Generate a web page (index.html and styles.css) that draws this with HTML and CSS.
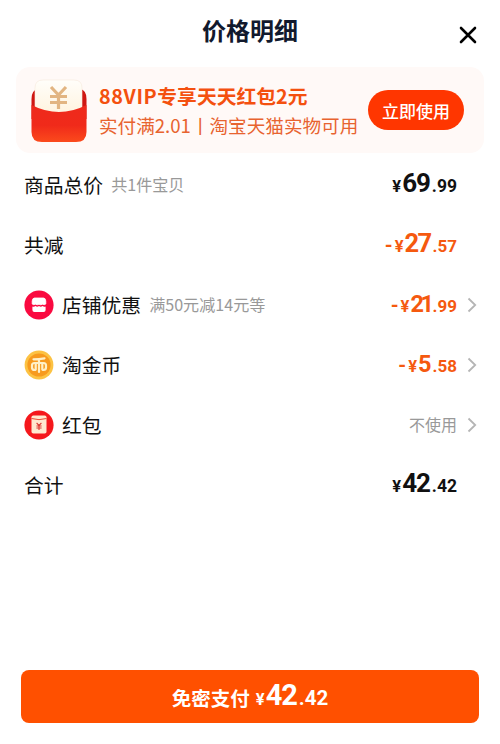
FILE: index.html
```html
<!DOCTYPE html>
<html lang="zh-CN">
<head>
    <meta charset="UTF-8">
    <meta name="viewport" content="width=device-width, initial-scale=1.0">
    <title>价格明细</title>
    <link rel="stylesheet" href="styles.css">
</head>
<body>
    <div class="sheet">
        <header class="header">
            <h1 class="title">价格明细</h1>
            <button class="close" aria-label="关闭">
                <svg width="18" height="18" viewBox="0 0 18 18"><path d="M2 2 L16 16 M16 2 L2 16" fill="none" stroke="#000" stroke-width="2.6" stroke-linecap="round"/></svg>
            </button>
        </header>

        <section class="banner">
            <svg class="banner-icon" width="56" height="64" viewBox="0 0 56 64">
                <defs>
                    <linearGradient id="packet" x1="0" y1="0" x2="0" y2="1">
                        <stop offset="0" stop-color="#ee2a1c"/>
                        <stop offset="0.55" stop-color="#f02a1a"/>
                        <stop offset="1" stop-color="#fb4a1c"/>
                    </linearGradient>
                    <linearGradient id="paper" x1="0" y1="0" x2="0" y2="1">
                        <stop offset="0" stop-color="#fffefa"/>
                        <stop offset="1" stop-color="#fff3de"/>
                    </linearGradient>
                </defs>
                <path d="M0.5 20 Q0.5 11 7 10 H49 Q55.5 11 55.5 20 V40 H0.5Z" fill="#cf1712"/>
                <path d="M4 9 Q4 1 12 1 H43 Q51 1 51 9 V36 H4Z" fill="url(#paper)" stroke="#f7e9dc" stroke-width="0.6"/>
                <g fill="none" stroke="#e2b582" stroke-width="3.2">
                    <path d="M20 8 L27.5 16 L35 8 M19 17.5 H36 M19 23.5 H36 M27.5 16 V30"/>
                </g>
                <path d="M0.5 26 Q28 40 55.5 26 V53 Q55.5 63 45 63 H11 Q0.5 63 0.5 53Z" fill="url(#packet)"/>
            </svg>
            <div class="banner-text">
                <div class="banner-title"><span class="vip">88VIP</span>专享天天红包2元</div>
                <div class="banner-desc">实付满2.01丨淘宝天猫实物可用</div>
            </div>
            <button class="use-button">立即使用</button>
        </section>

        <ul class="list">
            <li class="row">
                <span class="label">商品总价</span>
                <span class="note">共1件宝贝</span>
                <span class="price"><span class="yen">¥</span><span class="int">69</span><span class="dec">.99</span></span>
            </li>
            <li class="row">
                <span class="label">共减</span>
                <span class="price minus"><span class="sign">-</span><span class="yen">¥</span><span class="int">27</span><span class="dec">.57</span></span>
            </li>
            <li class="row link">
                <svg class="icon" width="30" height="30" viewBox="0 0 30 30">
                    <circle cx="15" cy="15" r="14.6" fill="#fa0a40"/>
                    <path d="M10.5 8 H19.5 Q21.5 8 21.8 11 V14 Q20.5 15.2 18.5 14.2 Q16.8 15.4 15 14.2 Q13.2 15.4 11.5 14.2 Q9.5 15.2 8.2 14 V11 Q8.5 8 10.5 8Z" fill="#fff" stroke="#fff" stroke-width="0.8" stroke-linejoin="round"/>
                    <path d="M8.4 16.4 Q10 17 11.5 16 Q13.2 17.4 15 16 Q16.8 17.4 18.5 16 Q20 17 21.6 16.4 V20 Q21.6 22 19.6 22 H10.4 Q8.4 22 8.4 20Z" fill="#fff"/>
                </svg>
                <span class="label">店铺优惠</span>
                <span class="note">满50元减14元等</span>
                <span class="price minus small"><span class="sign">-</span><span class="yen">¥</span><span class="int tight">21</span><span class="dec">.99</span></span>
                <svg class="arrow" width="10" height="16" viewBox="0 0 10 16"><path d="M1.5 1.5 L8.2 8 L1.5 14.5"/></svg>
            </li>
            <li class="row link">
                <svg class="icon" width="30" height="30" viewBox="0 0 30 30">
                    <circle cx="15" cy="15" r="14.4" fill="#fcc243"/>
                    <circle cx="15" cy="15" r="11.6" fill="#f79a1e"/>
                    <g fill="none" stroke="#fff0c8" stroke-width="2.2" stroke-linecap="round" stroke-linejoin="round">
                        <path d="M9.5 9.3 Q15 9.3 20.5 8.3 M15 9 V22 M11.5 20 H10.5 Q8 20 8 17.5 V15.5 Q8 13 10.5 13 H19.5 Q22 13 22 15.5 V17.5 Q22 20 19.5 20 H18.7 M11.7 13.5 V19.5 M18.3 13.5 V19.5"/>
                    </g>
                </svg>
                <span class="label">淘金币</span>
                <span class="price minus small"><span class="sign">-</span><span class="yen">¥</span><span class="int">5</span><span class="dec">.58</span></span>
                <svg class="arrow" width="10" height="16" viewBox="0 0 10 16"><path d="M1.5 1.5 L8.2 8 L1.5 14.5"/></svg>
            </li>
            <li class="row link">
                <svg class="icon" width="30" height="30" viewBox="0 0 30 30">
                    <circle cx="15" cy="15" r="14.6" fill="#f5181c"/>
                    <rect x="7.5" y="5.5" width="15" height="18" rx="1.8" fill="#ffe9d0"/>
                    <path d="M7.5 8.5 Q15 10.8 22.5 8.5" fill="none" stroke="#ee4a35" stroke-width="1"/>
                    <path d="M12.6 13 L15 15.5 L17.4 13 M12.4 16 H17.6 M12.4 18 H17.6 M15 15.5 V20" fill="none" stroke="#dc3b34" stroke-width="1.1"/>
                </svg>
                <span class="label">红包</span>
                <span class="value">不使用</span>
                <svg class="arrow" width="10" height="16" viewBox="0 0 10 16"><path d="M1.5 1.5 L8.2 8 L1.5 14.5"/></svg>
            </li>
            <li class="row">
                <span class="label">合计</span>
                <span class="price"><span class="yen">¥</span><span class="int">42</span><span class="dec">.42</span></span>
            </li>
        </ul>

        <button class="pay-button">
            <span class="pay-text">免密支付</span>
            <span class="price pay-price"><span class="yen">¥</span><span class="int">42</span><span class="dec">.42</span></span>
        </button>
    </div>
</body>
</html>
```

FILE: styles.css
```css
* {
    box-sizing: border-box;
}

body {
    margin: 0;
    background-color: #fff;
    font-family: "Noto Sans CJK SC", sans-serif;
    color: #111;
}

button {
    border: none;
    padding: 0;
    font-family: inherit;
    cursor: pointer;
}

.sheet {
    display: flex;
    flex-direction: column;
    height: 744px;
    padding-bottom: 21px;
}

.header {
    display: grid;
    grid-template-columns: 60px 1fr 60px;
    height: 67px;
}

.title {
    grid-column: 2;
    margin: 12px 0 0;
    font-size: 24px;
    line-height: 36px;
    font-weight: 700;
    text-align: center;
    color: #11192d;
}

.close {
    height: 18px;
    margin: 26px 0 0 19px;
    width: 18px;
    background: none;
}

.close svg {
    display: block;
}

.banner {
    display: flex;
    align-items: center;
    height: 86px;
    margin: 0 16px;
    padding: 0 20px 0 15px;
    border-radius: 14px;
    background-color: #fff9f7;
}

.banner-icon {
    flex: none;
    margin-top: 2px;
}

.banner-text {
    flex: 1;
    margin-left: 12px;
    padding-top: 1px;
    white-space: nowrap;
}

.banner-title {
    font-size: 19.8px;
    line-height: 28px;
    font-weight: 700;
    color: #f4500f;
}

.vip {
    letter-spacing: 0.6px;
}

.banner-desc {
    font-size: 18.6px;
    line-height: 29px;
    color: #e8632f;
}

.use-button {
    flex: none;
    width: 96px;
    height: 40px;
    border-radius: 20px;
    background-color: #ff3600;
    color: #fff;
    font-size: 17px;
    font-weight: 500;
}

.list {
    list-style: none;
    margin: 2px 0 0;
    padding: 0 43px 0 24px;
}

.row {
    display: flex;
    align-items: center;
    height: 60px;
}

.row.link {
    margin-right: -20px;
}

.icon {
    margin-right: 8px;
}

.label {
    padding-bottom: 2px;
    font-size: 19.8px;
}

.note {
    margin-left: 8px;
    padding-bottom: 2px;
    font-size: 16.1px;
    color: #999;
}

.value {
    margin-left: auto;
    padding-bottom: 2px;
    font-size: 16px;
    color: #999;
}

.price {
    display: flex;
    align-items: baseline;
    margin-left: auto;
    font-family: Roboto, sans-serif;
    font-weight: 700;
    line-height: 30px;
}

.minus {
    color: #f5590f;
}

.sign {
    margin-right: 2px;
    font-size: 20px;
}

.yen {
    margin-right: 1px;
    font-size: 16.5px;
}

.int {
    margin-right: 2px;
    font-size: 26px;
    letter-spacing: -1.1px;
}

.dec {
    font-size: 17.5px;
}

.minus .int {
    font-size: 25.5px;
    letter-spacing: -1.6px;
}

.minus .dec {
    font-size: 17px;
}

.small .int {
    font-size: 23.5px;
    letter-spacing: -1px;
}

/* closes the wide gap in front of the digit 1 */
.small .tight {
    margin-right: 2px;
    letter-spacing: -3.4px;
}

.arrow {
    margin-left: 10px;
}

.arrow path {
    fill: none;
    stroke: #b5b5b5;
    stroke-width: 1.8;
}

.pay-button {
    display: flex;
    justify-content: center;
    align-items: center;
    height: 53px;
    margin: auto 21px 0;
    border-radius: 8px;
    background-color: #ff5000;
    color: #fff;
    font-size: 19.5px;
    font-weight: 700;
}

.pay-text {
    padding-top: 1px;
}

.pay-price {
    margin-left: 6px;
    padding: 2px 0 0;
}

.pay-price .int {
    font-size: 29px;
}

.pay-price .dec {
    font-size: 20.5px;
}
```
